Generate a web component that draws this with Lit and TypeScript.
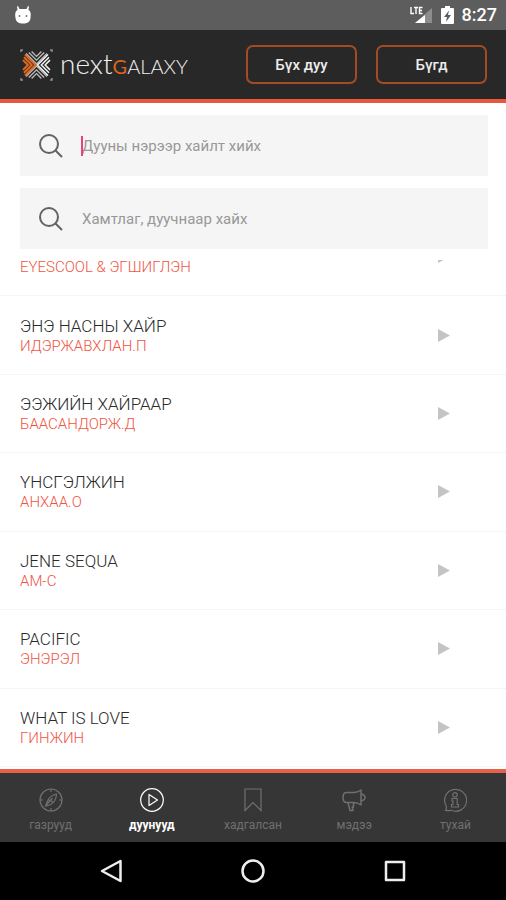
import { LitElement, html, svg, css } from "lit";
import { customElement, property } from "lit/decorators.js";

interface Song {
  title: string;
  artist: string;
}

const songs: Song[] = [
  { title: "", artist: "EYESCOOL & ЭГШИГЛЭН" },
  { title: "ЭНЭ НАСНЫ ХАЙР", artist: "ИДЭРЖАВХЛАН.П" },
  { title: "ЭЭЖИЙН ХАЙРААР", artist: "БААСАНДОРЖ.Д" },
  { title: "ҮНСГЭЛЖИН", artist: "АНХАА.О" },
  { title: "JENE SEQUA", artist: "AM-C" },
  { title: "PACIFIC", artist: "ЭНЭРЭЛ" },
  { title: "WHAT IS LOVE", artist: "ГИНЖИН" },
];

const tabs = [
  {
    label: "газрууд",
    icon: svg`<circle cx="12" cy="12" r="11"/><path d="M12 1v3M12 20v3M1 12h3M20 12h3M17.500 6c-4 1-7 3-8.500 6l-2.500 6c4-.5 7-2 9-5 1.500-2.500 2-5 2-7zM6.500 18l7-8M9 12c2 0 4 1 5 3"/>`,
  },
  {
    label: "дуунууд",
    icon: svg`<circle cx="12" cy="12" r="11.300"/><path stroke-linejoin="round" d="M9 6.500v11l8.500-5.500z"/>`,
  },
  {
    label: "хадгалсан",
    icon: svg`<path d="M4 1h16v21.500l-8-8-8 8z"/>`,
  },
  {
    label: "мэдээ",
    icon: svg`<path stroke-linejoin="round" stroke-width="1.500" d="M4.500 4.500H12c3 0 5-1 7-2.500v15c-2-1.500-4-2.500-7-2.500H4.500C2 14.500 1 12 1 9.500s1-5 3.500-5zM19 6c2.500.5 4 1.500 4 3.500S21.500 12.500 19 13M6 14.500l2 8h3l-.8-3.500h1.300v-4.500"/>`,
  },
  {
    label: "тухай",
    icon: svg`<path d="M2.500 22.500c1-1.500 1.200-3 .7-4.500A11 11 0 1 1 8 22.300c-2 .4-4 .5-5.500.2z"/><circle cx="12" cy="6.800" r="2.200"/><path d="M9 10.500h5.200v6h1.300V19h-7v-2.500H10V13H9z"/>`,
  },
];

@customElement("search-field")
class SearchField extends LitElement {
  @property() label = "";
  @property({ type: Boolean }) active = false;

  static styles = css`
    :host {
      display: block;
    }
    .field {
      display: flex;
      align-items: center;
      height: 61px;
      padding: 0 16px 0 18px;
      background: #f5f5f5;
    }
    .glass {
      flex: none;
      width: 26px;
      height: 26px;
      margin-right: 18px;
      fill: none;
      stroke: #636363;
      stroke-width: 2;
    }
    .entry {
      position: relative;
      flex: 1;
      display: flex;
    }
    .caret {
      position: absolute;
      left: -1px;
      top: 0;
      bottom: 0;
      width: 2px;
      background: #e8437c;
    }
    input {
      flex: 1;
      min-width: 0;
      height: 20px;
      padding: 0;
      border: 0;
      outline: 0;
      background: none;
      font: 400 15px/20px Roboto, sans-serif;
      color: #333;
    }
    input::placeholder {
      color: #989898;
      opacity: 1;
    }
  `;

  render() {
    return html`<label class="field">
      <svg class="glass" viewBox="0 0 26 26" aria-hidden="true">
        <circle cx="11" cy="11" r="9" />
        <path d="M17.500 17.500l6.500 6.500" />
      </svg>
      <span class="entry">
        <input type="text" aria-label=${this.label} placeholder=${this.label} />
        ${this.active ? html`<span class="caret"></span>` : null}
      </span>
    </label>`;
  }
}

@customElement("app-root")
class AppRoot extends LitElement {
  static styles = css`
    :host {
      display: flex;
      flex-direction: column;
      min-height: 100vh;
      background: #fff;
      font-family: Roboto, sans-serif;
    }
    * {
      box-sizing: border-box;
    }
    button {
      padding: 0;
      background: none;
      border: 0;
      font: inherit;
      color: inherit;
    }
    .status {
      display: flex;
      align-items: center;
      gap: 8px;
      height: 30px;
      padding: 0 9px 0 14px;
      background: #5d5d5d;
      color: #fff;
      font: 500 18px/30px Roboto, sans-serif;
    }
    .droid {
      width: 18px;
      height: 20px;
      margin-right: auto;
    }
    .signal {
      width: 23px;
      height: 18px;
    }
    .battery {
      width: 13px;
      height: 18px;
    }
    .header {
      display: flex;
      align-items: center;
      gap: 19px;
      height: 73px;
      padding: 0 19px 0 20px;
      background: #282828;
      border-bottom: 4px solid #e9573f;
    }
    .logo {
      display: flex;
      align-items: center;
      gap: 7px;
      margin-right: auto;
      text-decoration: none;
    }
    .mark {
      width: 33px;
      height: 32px;
    }
    .word {
      font: 300 28px/32px Lato, sans-serif;
      color: #f0f0f0;
      white-space: nowrap;
    }
    .caps {
      font-size: 20px;
    }
    .accent {
      color: #dc6420;
      font-weight: 400;
    }
    .filter {
      width: 111px;
      height: 39px;
      border: 2px solid #a34c24;
      border-radius: 7px;
      color: #ececec;
      font: 500 15px/20px Roboto, sans-serif;
    }
    .search {
      display: flex;
      flex-direction: column;
      gap: 12px;
      padding: 12px 18px 11px 20px;
    }
    .viewport {
      flex: 1;
      display: flex;
      overflow: hidden;
    }
    .songs {
      flex: 1;
      display: flex;
      flex-direction: column;
      margin: -42px 0 0;
      padding: 0 0 2px;
      list-style: none;
    }
    .song {
      flex: 1;
      display: flex;
      align-items: center;
      justify-content: space-between;
      min-height: 76px;
      padding: 0 56px 0 20px;
      border-bottom: 1px solid #f5f5f5;
    }
    .text {
      display: flex;
      flex-direction: column;
      gap: 3px;
      padding-bottom: 2px;
    }
    .title,
    .artist {
      margin: 0;
      font-weight: 300;
    }
    .title {
      min-height: 20px;
      font-size: 17px;
      line-height: 20px;
      color: #2a2a2a;
    }
    .artist {
      font-size: 15px;
      line-height: 14px;
      color: #f0543f;
    }
    .play {
      width: 12px;
      height: 13px;
      display: flex;
    }
    .play svg {
      width: 12px;
      height: 13px;
      fill: #c4c4c4;
    }
    .tabs {
      display: grid;
      grid-template-columns: repeat(5, 1fr);
      height: 73px;
      border-top: 4px solid #e9604a;
      background: #363636;
    }
    .tab {
      display: flex;
      flex-direction: column;
      align-items: center;
      gap: 5px;
      padding-top: 15px;
      color: #707070;
      font: 400 12px/16px Roboto, sans-serif;
    }
    .tab svg {
      width: 24px;
      height: 24px;
      fill: none;
      stroke: currentColor;
      stroke-width: 1.2;
    }
    .tab.on {
      color: #fff;
      font-weight: 700;
    }
    .system {
      display: flex;
      justify-content: center;
      gap: 118px;
      height: 58px;
      background: #000;
    }
    .key {
      display: flex;
      align-items: center;
    }
    .key svg {
      width: 24px;
      height: 24px;
      fill: none;
      stroke: #eee;
      stroke-width: 2.5;
      stroke-linejoin: round;
    }
  `;

  private mark() {
    const wing = (turn: number, color: string, weight: number) => svg`
      <g transform="rotate(${turn} 16.500 16)" fill="none" stroke=${color} stroke-width=${weight}>
        ${[0, 1, 2].map((i) => {
          const tip = 15.5 - i * 3.8;
          const reach = 10.5 - i * 2.8;
          return svg`<path d="M${tip - reach} ${16 - reach}L${tip} 16L${tip - reach} ${16 + reach}"/>`;
        })}
      </g>`;
    return html`<svg class="mark" viewBox="0 0 33 32" aria-hidden="true">
      ${wing(90, "#bdbdbd", 1.3)}${wing(270, "#bdbdbd", 1.3)}
      ${wing(180, "#f2f2f2", 1.5)}${wing(0, "#e06a22", 2)}
      <path fill="none" stroke="#8f8f8f" stroke-width="1.500"
        d="M1 3V1h2M30 1h2v2M1 29v2h2M30 31h2v-2" />
    </svg>`;
  }

  render() {
    return html`
      <div class="status">
        <svg class="droid" viewBox="0 0 18 20" fill="#fff" aria-hidden="true">
          <path d="M4 1l1.500 3h7L14 1l1 .5-.5 3.500C17 6.500 17 9 16.500 13c-.5 4-3 5.500-7.500 5.500S2 17 1.500 13C1 9 1 6.500 3.500 5L3 1.500z" />
          <circle cx="5.500" cy="11" r="1" fill="#777" />
          <circle cx="12.500" cy="11" r="1" fill="#777" />
        </svg>
        <svg class="signal" viewBox="0 0 23 18" aria-hidden="true">
          <path d="M22 2v15H5z" fill="#8d8d8d" />
          <path d="M15 9v8H5z" fill="#fff" />
          <path d="M1 1v6.500h3M4 1.500h4M6 1.500v6.500M12.500 1.500h-3v6h3M9.500 4.500h2.500" fill="none" stroke="#fff" stroke-width="1.400" />
        </svg>
        <svg class="battery" viewBox="0 0 13 18" aria-hidden="true">
          <path d="M4 0h5v2h3q1 0 1 1v14q0 1-1 1H1q-1 0-1-1V3q0-1 1-1h3z" fill="#fff" />
          <path d="M8 4.500L3 11h3l-1 5 5-7H7z" fill="#5d5d5d" />
        </svg>
        <span>8:27</span>
      </div>

      <header class="header">
        <a class="logo" href="#">
          ${this.mark()}
          <span class="word">next<span class="caps"><span class="accent">G</span>ALAXY</span></span>
        </a>
        <button class="filter">Бүх дуу</button>
        <button class="filter">Бүгд</button>
      </header>

      <div class="search">
        <search-field label="Дууны нэрээр хайлт хийх" active></search-field>
        <search-field label="Хамтлаг, дуучнаар хайх"></search-field>
      </div>

      <main class="viewport">
        <ul class="songs">
          ${songs.map(
            (song) => html`<li class="song">
              <div class="text">
                <p class="title">${song.title}</p>
                <p class="artist">${song.artist}</p>
              </div>
              <button class="play" aria-label="Play">
                <svg viewBox="0 0 12 13"><path d="M0 0l12 6.500L0 13z" /></svg>
              </button>
            </li>`
          )}
        </ul>
      </main>

      <nav class="tabs">
        ${tabs.map(
          (tab, i) => html`<button class="tab ${i === 1 ? "on" : ""}">
            <svg viewBox="0 0 24 24" aria-hidden="true">${tab.icon}</svg>
            <span>${tab.label}</span>
          </button>`
        )}
      </nav>

      <div class="system">
        <button class="key" aria-label="Back">
          <svg viewBox="0 0 24 24"><path d="M21.500 2v20L3 12z" /></svg>
        </button>
        <button class="key" aria-label="Home">
          <svg viewBox="0 0 24 24"><circle cx="12" cy="12" r="10.500" /></svg>
        </button>
        <button class="key" aria-label="Recent">
          <svg viewBox="0 0 24 24"><path d="M3 3h18v18H3z" /></svg>
        </button>
      </div>
    `;
  }
}
